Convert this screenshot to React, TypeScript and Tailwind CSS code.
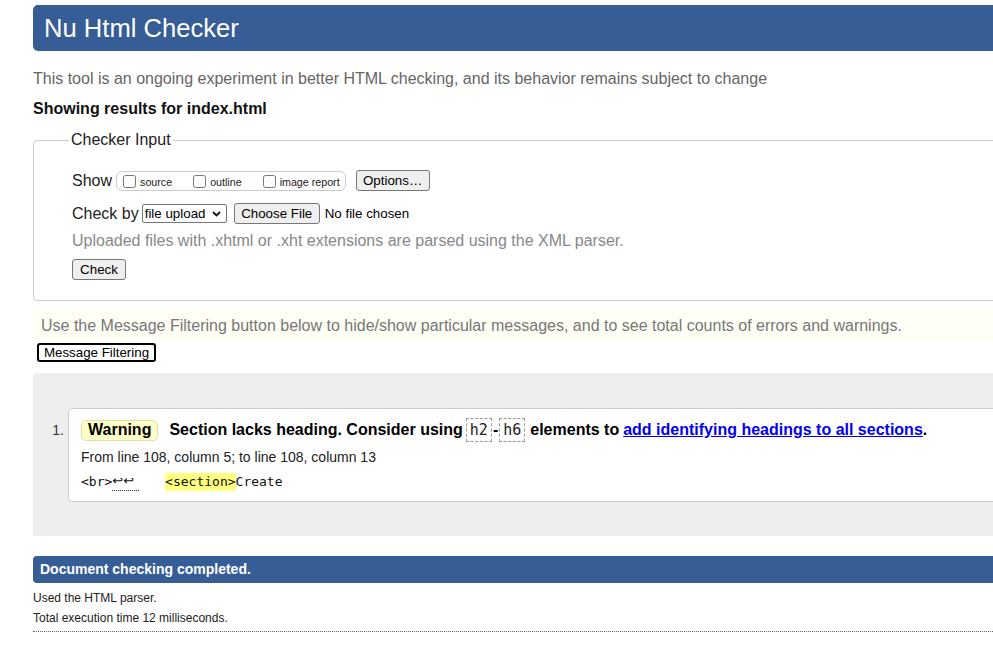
import React from "react";

const SANS = { fontFamily: '"Liberation Sans", Arial, sans-serif' };
const MONO = { fontFamily: '"DejaVu Sans Mono", monospace' };

function NativeButton({ children, className = "" }: { children: React.ReactNode; className?: string }) {
  return (
    <button
      className={`block h-[21px] px-[6px] bg-[#efefef] border border-[#767676] rounded-[3px] text-[13.33px] leading-none text-black ${className}`}
    >
      {children}
    </button>
  );
}

function Check({ label }: { label: string }) {
  return (
    <label className="flex items-center mr-[15px] last:mr-[5px]">
      <input type="checkbox" className="w-[13px] h-[13px] mt-[1px] ml-[6px] mr-[4px]" />
      <span className="text-[10.7px] leading-none mt-[3px]">{label}</span>
    </label>
  );
}

export default function App() {
  return (
    <div className="w-[993px] h-[656px] overflow-hidden bg-white text-[#222]" style={SANS}>
      <div className="ml-[33px] w-[1150px]">
        {/* Title bar */}
        <h1 className="mt-[5px] h-[46px] flex items-center pl-[11px] bg-[#365d95] text-white text-[25.6px] rounded-l-[5px]">
          Nu Html Checker
        </h1>

        <p className="mt-[19px] text-[16px] leading-[18px] text-[#666]">
          This tool is an ongoing experiment in better HTML checking, and its behavior remains subject to change
        </p>
        <p className="mt-[12px] text-[16px] leading-[18px] font-bold text-[#111]">Showing results for index.html</p>

        {/* Checker input */}
        <fieldset className="mt-[13px] border border-[#ccc] rounded-[4px] pl-[38px] pb-[20px]">
          <legend className="ml-[-3px] px-[2px] text-[16px] leading-[18px] text-[#222]">Checker Input</legend>

          <div className="mt-[20px] h-[23px] flex items-center">
            <span className="text-[16px] mr-[4px]">Show</span>
            <div className="h-[20px] flex items-center border border-[#ccc] rounded-[6px]">
              <Check label="source" />
              <Check label="outline" />
              <Check label="image report" />
            </div>
            <NativeButton className="ml-[10px] w-[74px]">Options…</NativeButton>
          </div>

          <div className="mt-[10px] h-[23px] flex items-center">
            <span className="text-[16px] mr-[3px]">Check by</span>
            <div className="w-[85px] h-[19px] flex items-center justify-between border border-[#767676] rounded-[2px] pl-[2px] pr-[5px] text-[13.33px] text-black">
              <span>file upload</span>
              <svg width="9" height="6" viewBox="0 0 9 6" fill="none" stroke="#111" strokeWidth="1.8">
                <path d="M1 1l3.5 3.5L8 1" />
              </svg>
            </div>
            <NativeButton className="ml-[7px] w-[86px]">Choose File</NativeButton>
            <span className="ml-[5px] text-[13.33px] text-black">No file chosen</span>
          </div>

          <p className="mt-[7px] text-[16px] leading-[18px] text-[#888]">
            Uploaded files with .xhtml or .xht extensions are parsed using the XML parser.
          </p>

          <NativeButton className="mt-[9px] w-[54px] h-[21px]">Check</NativeButton>
        </fieldset>

        {/* Filter notice */}
        <div className="mt-[9px] h-[31px] flex items-center pl-[8px] bg-[#fffff6] text-[16px] text-[#777]">
          Use the Message Filtering button below to hide/show particular messages, and to see total counts of errors and warnings.
        </div>
        <button className="block mt-[2px] ml-[4px] w-[119px] h-[19px] border-2 border-black rounded-[3px] bg-white text-[13.33px] leading-none text-black">
          Message Filtering
        </button>

        {/* Results */}
        <div className="mt-[11px] bg-[#eee] rounded-tl-[4px] pt-[35px] pb-[34px] flex">
          <span className="w-[31px] pt-[12px] text-right text-[14px] text-[#333]">1.</span>
          <div className="ml-[4px] flex-1 bg-white border border-[#ccc] rounded-[4px] pl-[12px] pt-[9px] pb-[10px]">
            <div className="h-[24px] flex items-center text-[16px] font-bold text-black">
              <span className="h-[21px] px-[6px] flex items-center bg-[#ffffc8] border border-[#e0e0a8] rounded-[5px]">
                Warning
              </span>
              <span className="ml-[11px]">Section lacks heading. Consider using</span>
              <code
                className="ml-[3px] h-[24px] px-[3px] flex items-center border border-dashed border-[#999] text-[15px] font-normal text-[#222]"
                style={MONO}
              >
                h2
              </code>
              <span className="mx-[1px]">-</span>
              <code
                className="h-[24px] px-[3px] flex items-center border border-dashed border-[#999] text-[15px] font-normal text-[#222]"
                style={MONO}
              >
                h6
              </code>
              <span className="ml-[5px]">elements to</span>
              <a href="#" className="ml-[4px] text-[#0000ee] underline">
                add identifying headings to all sections
              </a>
              <span>.</span>
            </div>
            <p className="mt-[6px] text-[14px] leading-[18px] text-[#222]">
              From line 108, column 5; to line 108, column 13
            </p>
            <p className="mt-[7px] text-[13px] leading-[18px] text-[#111] flex whitespace-pre" style={MONO}>
              <span>{"<br>"}</span>
              <span
                className="border-b border-dotted border-[#333] leading-[15px] pr-[5px]"
                style={{ fontFamily: '"DejaVu Sans", sans-serif' }}
              >
                ↩↩
              </span>
              <span className="ml-[26px] bg-[#ffff80]">{"<section>"}</span>
              <span>Create</span>
            </p>
          </div>
        </div>

        {/* Summary */}
        <div className="mt-[20px] h-[27px] flex items-center pl-[7px] bg-[#365d95] rounded-l-[4px] text-[14px] font-bold text-white">
          Document checking completed.
        </div>
        <p className="mt-[8px] text-[12px] leading-[14px] text-[#222]">Used the HTML parser.</p>
        <p className="mt-[6px] text-[12px] leading-[14px] text-[#222]">Total execution time 12 milliseconds.</p>
        <div className="mt-[6px] border-t border-dotted border-[#666]" />
      </div>
    </div>
  );
}
